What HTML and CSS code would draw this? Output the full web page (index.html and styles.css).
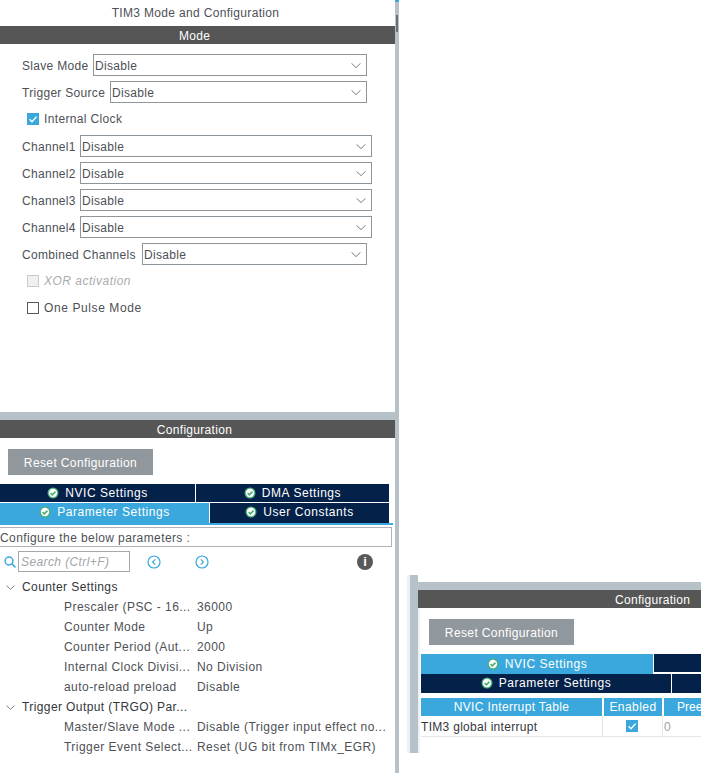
FILE: index.html
```html
<!DOCTYPE html>
<html lang="en">
<head>
<meta charset="utf-8">
<title>TIM3 Mode and Configuration</title>
<link rel="stylesheet" href="styles.css">
</head>
<body>
<svg class="defs" width="0" height="0" aria-hidden="true">
  <defs>
    <symbol id="chev" viewBox="0 0 10 5"><path d="M.5.3 5 4.6 9.5.3" fill="none" stroke="#767b80" stroke-width="1"/></symbol>
    <symbol id="ok" viewBox="0 0 12 12"><circle cx="6" cy="6" r="5.5" fill="#4caf78"/><circle cx="6" cy="6" r="4.2" fill="#fff"/><path d="M3.6 6.1 5.4 7.9 8.5 4.6" fill="none" stroke="#4caf78" stroke-width="1.6"/></symbol>
    <symbol id="tick" viewBox="0 0 12 12"><path d="M2.5 6.2 5 8.7 9.6 3.6" fill="none" stroke="#fff" stroke-width="1.4"/></symbol>
  </defs>
</svg>
<div class="screen">
  <section class="panel">
    <h1 class="title">TIM3 Mode and Configuration</h1>
    <h2 class="bar">Mode</h2>
    <div class="mode">
      <div class="row"><span class="lbl w-slave">Slave Mode</span><div class="sel sel-short"><span>Disable</span><svg class="chev"><use href="#chev"/></svg></div></div>
      <div class="row"><span class="lbl w-trigger">Trigger Source</span><div class="sel sel-short"><span>Disable</span><svg class="chev"><use href="#chev"/></svg></div></div>
      <label class="check check-int"><span class="box box-on"><svg class="tick"><use href="#tick"/></svg></span>Internal Clock</label>
      <div class="row"><span class="lbl w-ch">Channel1</span><div class="sel sel-long"><span>Disable</span><svg class="chev"><use href="#chev"/></svg></div></div>
      <div class="row"><span class="lbl w-ch">Channel2</span><div class="sel sel-long"><span>Disable</span><svg class="chev"><use href="#chev"/></svg></div></div>
      <div class="row"><span class="lbl w-ch">Channel3</span><div class="sel sel-long"><span>Disable</span><svg class="chev"><use href="#chev"/></svg></div></div>
      <div class="row"><span class="lbl w-ch">Channel4</span><div class="sel sel-long"><span>Disable</span><svg class="chev"><use href="#chev"/></svg></div></div>
      <div class="row"><span class="lbl w-comb">Combined Channels</span><div class="sel sel-short"><span>Disable</span><svg class="chev"><use href="#chev"/></svg></div></div>
      <label class="check check-xor"><span class="box box-off"></span>XOR activation</label>
      <label class="check check-one"><span class="box"></span>One Pulse Mode</label>
    </div>
    <div class="split"></div>
    <h2 class="bar">Configuration</h2>
    <button class="reset reset-left">Reset Configuration</button>
    <div class="tabs tabs-left">
      <div class="tabrow rowa">
        <div class="tab t-nvic"><svg class="ok"><use href="#ok"/></svg>NVIC Settings</div>
        <div class="tab t-dma"><svg class="ok"><use href="#ok"/></svg>DMA Settings</div>
      </div>
      <div class="tabrow rowb">
        <div class="tab tab-on t-param"><svg class="ok"><use href="#ok"/></svg>Parameter Settings</div>
        <div class="tab t-user"><svg class="ok"><use href="#ok"/></svg>User Constants</div>
      </div>
    </div>
    <div class="tabline"></div>
    <div class="notice">Configure the below parameters :</div>
    <div class="searchbar">
      <svg class="mag" viewBox="0 0 12 12"><circle cx="5" cy="5" r="3.9" fill="none" stroke="#3aa8dc" stroke-width="1.5"/><path d="M8 8l3.4 3.4" stroke="#3aa8dc" stroke-width="1.6"/></svg>
      <div class="search">Search (Ctrl+F)</div>
      <svg class="nav nav-prev" viewBox="0 0 14 14"><circle cx="7" cy="7" r="6" fill="none" stroke="#3aa8dc" stroke-width="1.2"/><path d="M8.2 4.4 5.6 7l2.6 2.6" fill="none" stroke="#3aa8dc" stroke-width="1.2"/></svg>
      <svg class="nav nav-next" viewBox="0 0 14 14"><circle cx="7" cy="7" r="6" fill="none" stroke="#3aa8dc" stroke-width="1.2"/><path d="M5.8 4.4 8.4 7l-2.6 2.6" fill="none" stroke="#3aa8dc" stroke-width="1.2"/></svg>
      <div class="info">i</div>
    </div>
    <div class="tree">
      <div class="group"><svg class="twisty"><use href="#chev"/></svg>Counter Settings</div>
      <div class="item"><span class="k">Prescaler (PSC - 16...</span><span class="v">36000</span></div>
      <div class="item"><span class="k">Counter Mode</span><span class="v">Up</span></div>
      <div class="item"><span class="k">Counter Period (Aut...</span><span class="v">2000</span></div>
      <div class="item"><span class="k">Internal Clock Divisi...</span><span class="v">No Division</span></div>
      <div class="item"><span class="k">auto-reload preload</span><span class="v">Disable</span></div>
      <div class="group"><svg class="twisty"><use href="#chev"/></svg>Trigger Output (TRGO) Par...</div>
      <div class="item"><span class="k">Master/Slave Mode ...</span><span class="v">Disable (Trigger input effect no...</span></div>
      <div class="item"><span class="k">Trigger Event Select...</span><span class="v">Reset (UG bit from TIMx_EGR)</span></div>
    </div>
  </section>
  <div class="divider"><i class="divider-cap"></i><i class="divider-mark"></i></div>
  <aside class="side">
    <div class="frag">
      <div class="frag-rail"></div>
      <div class="frag-body">
        <h2 class="bar bar-frag"><span>Configuration</span></h2>
        <div class="frag-main">
          <button class="reset reset-right">Reset Configuration</button>
          <div class="tabs tabs-right">
            <div class="tabrow rowc">
              <div class="tab tab-on t-nvic2"><svg class="ok"><use href="#ok"/></svg>NVIC Settings</div>
              <div class="tab tab-fill"></div>
            </div>
            <div class="tabrow rowd">
              <div class="tab t-param2"><svg class="ok"><use href="#ok"/></svg>Parameter Settings</div>
              <div class="tab tab-fill"></div>
            </div>
          </div>
          <div class="tbl">
            <div class="thead">
              <div class="th c1">NVIC Interrupt Table</div>
              <div class="th c2">Enabled</div>
              <div class="th c3">Pree</div>
            </div>
            <div class="trow">
              <div class="td c1">TIM3 global interrupt</div>
              <div class="td c2 td-mid"><span class="box box-on"><svg class="tick"><use href="#tick"/></svg></span></div>
              <div class="td c3 td-dim">0</div>
            </div>
          </div>
        </div>
      </div>
    </div>
  </aside>
</div>
</body>
</html>
```
FILE: styles.css
```css
* { box-sizing: border-box; }
html, body { margin: 0; padding: 0; background: #fff; }
body { width: 701px; height: 774px; overflow: hidden; font: 12px/16px "Liberation Sans", Arial, sans-serif; color: #4e5056; letter-spacing: .3px; }
.defs { position: absolute; }
.screen { display: flex; width: 701px; height: 774px; }
.panel { width: 395px; flex: none; display: flex; flex-direction: column; }
.title { margin: 0; height: 26px; padding: 1px 4px 0 0; font: inherit; line-height: 25px; text-align: center; letter-spacing: .33px; }
.bar { margin: 0; height: 18px; padding: 1px 6px 0 0; background: #555655; color: #fff; font: inherit; line-height: 18px; text-align: center; letter-spacing: .3px; }
.mode { height: 368px; padding: 10px 0 0 22px; display: flex; flex-direction: column; }
.row { display: flex; align-items: center; height: 22px; margin-bottom: 5px; }
.lbl { flex: none; white-space: nowrap; padding-top: 2px; }
.w-slave { width: 71px; }
.w-trigger { width: 88px; }
.w-ch { width: 58px; }
.w-comb { width: 120px; }
.sel { height: 22px; border: 1px solid #8f969b; display: flex; align-items: center; justify-content: space-between; padding: 0 5px 0 1px; }
.sel span { padding-top: 2px; }
.sel-short { flex: 1; margin-right: 28px; }
.sel-long { flex: 1; margin-right: 23px; }
.chev { width: 10px; height: 5px; }
.check { display: flex; align-items: center; gap: 5px; height: 16px; margin-left: 5px; }
.check-int { margin-top: 3px; margin-bottom: 8px; letter-spacing: .35px; }
.check-xor { margin-top: 3px; margin-bottom: 11px; color: #a9acae; font-style: italic; letter-spacing: .5px; }
.check-one { letter-spacing: .6px; }
.box { width: 12px; height: 12px; border: 1px solid #56585b; display: inline-flex; flex: none; background: #fff; }
.box-on { border: 0; background: #3aa8dc; }
.box-off { border-color: #c8cbcd; background: #eef0f1; }
.tick { width: 12px; height: 12px; }
.split { height: 8px; background: #b7c2c8; flex: none; }
.reset { display: block; width: 145px; height: 26px; padding: 2px 0 0; border: 0; background: #90979d; color: #fff; font: inherit; letter-spacing: .38px; }
.reset-left { margin: 11px 0 9px 8px; }
.reset-right { margin: 11px 0 9px 9px; }
.tabs { display: flex; flex-direction: column; }
.tabs-left { width: 389px; }
.tabrow { display: flex; }
.rowa { height: 19px; }
.rowb { height: 20px; }
.rowc { height: 20px; }
.rowd { height: 19px; }
.tab { display: flex; align-items: center; justify-content: center; gap: 6px; background: #042149; color: #fff; letter-spacing: .55px; white-space: nowrap; border-right: 1px solid #fff; }
.tab:last-child { border-right: 0; }
.tab-on { background: #3aa8dc; }
.rowa .tab { border-bottom: 1px solid #fff; }
.rowb .tab, .rowd .tab { padding-bottom: 2px; }
.rowc .tab-fill { border-bottom: 2px solid #fff; }
.t-nvic { width: 196px; }
.t-dma { flex: 1; }
.t-param { width: 210px; }
.t-user { flex: 1; }
.ok { width: 12px; height: 12px; flex: none; }
.tabline { width: 393px; height: 2px; background: #3aa8dc; flex: none; }
.notice { margin-top: 2px; width: 392px; height: 20px; border: 1px solid #aeb3b6; border-left: 0; line-height: 20px; letter-spacing: .4px; flex: none; }
.searchbar { display: flex; align-items: center; height: 21px; margin-top: 4px; }
.mag { width: 12px; height: 12px; margin-left: 4px; flex: none; }
.search { width: 112px; height: 21px; margin-left: 2px; border: 1px solid #a5a9ac; color: #a2a5a8; font-style: italic; line-height: 21px; padding-left: 2px; flex: none; letter-spacing: .4px; }
.nav { width: 14px; height: 14px; flex: none; }
.nav-prev { margin-left: 17px; }
.nav-next { margin-left: 34px; }
.info { width: 16px; height: 16px; margin-left: 148px; border-radius: 50%; background: #595959; color: #fff; font-weight: bold; font-size: 13px; line-height: 16px; text-align: center; flex: none; letter-spacing: 0; }
.tree { margin-top: 5px; display: flex; flex-direction: column; }
.group, .item { height: 20px; line-height: 20px; white-space: nowrap; }
.group { display: flex; align-items: center; padding-left: 6px; color: #33363b; letter-spacing: .4px; }
.twisty { width: 9px; height: 5px; margin-right: 7px; flex: none; }
.item { display: flex; padding-left: 64px; letter-spacing: .45px; }
.k { width: 133px; flex: none; }
.divider { width: 4px; height: 773px; background: #b7c2c8; flex: none; position: relative; }
.divider-cap { position: absolute; left: 0; top: 0; width: 4px; height: 2px; background: #3aa8dc; }
.divider-mark { position: absolute; left: 1px; top: 15px; width: 2px; height: 17px; background: #6b7276; }
.side { flex: 1; min-width: 0; overflow: hidden; padding: 575px 0 0 8px; }
.frag { display: flex; height: 178px; border-left: 3px solid #eef1f3; }
.frag-rail { width: 8px; background: #b7c2c8; flex: none; }
.frag-body { width: 283px; flex: none; margin-top: 7px; display: flex; flex-direction: column; border-top: 8px solid #b7c2c8; }
.bar-frag { text-align: left; padding: 1px 0 0 197px; flex: none; }
.frag-main { flex: 1; border-left: 2px solid #eef1f3; }
.tabs-right { margin-left: 1px; }
.t-nvic2 { width: 233px; }
.t-param2 { width: 251px; }
.tab-fill { flex: 1; }
.tbl { margin: 5px 0 0 1px; width: 280px; }
.thead { display: flex; height: 18px; gap: 2px; }
.th { background: #3aa8dc; color: #fff; text-align: center; line-height: 19px; letter-spacing: .35px; white-space: nowrap; flex: none; }
.th.c1 { width: 181px; }
.th.c2 { width: 58px; letter-spacing: .45px; }
.th.c3 { flex: 1; text-align: left; padding-left: 13px; letter-spacing: 0; }
.trow { display: flex; height: 21px; border-bottom: 1px solid #e3e5e6; }
.td { line-height: 22px; color: #33363b; white-space: nowrap; flex: none; }
.td.c1 { width: 182px; border-right: 1px solid #e3e5e6; }
.td.c2 { width: 60px; border-right: 1px solid #e3e5e6; }
.td.c3 { flex: 1; }
.td-mid { display: flex; align-items: center; justify-content: center; padding-right: 2px; }
.td-dim { color: #a0a3a6; padding-left: 1px; }
```
